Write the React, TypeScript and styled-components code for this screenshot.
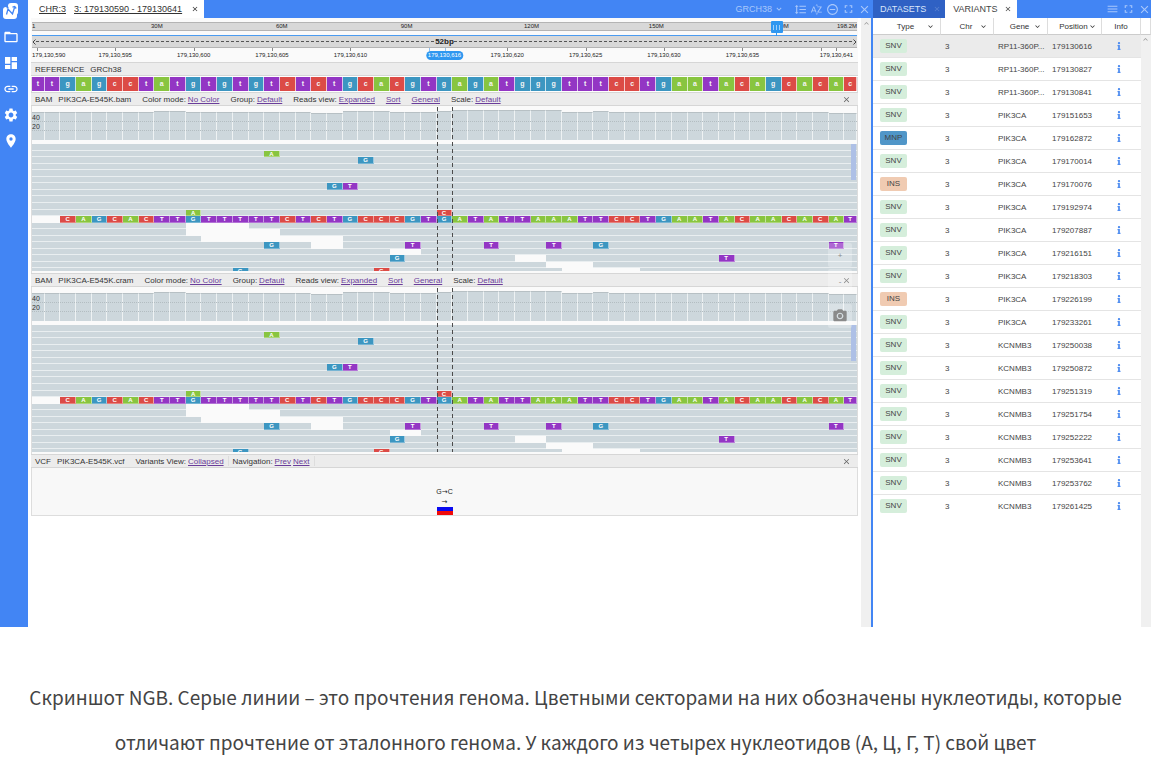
import React from "react";
import styled, { createGlobalStyle } from "styled-components";
import {
  MdCameraAlt,
  MdClose,
  MdDashboard,
  MdFolderOpen,
  MdFormatLineSpacing,
  MdFullscreen,
  MdKeyboardArrowDown,
  MdKeyboardArrowUp,
  MdLink,
  MdMenu,
  MdPlace,
  MdRemoveCircleOutline,
  MdSettings,
  MdSortByAlpha,
} from "react-icons/md";
import { FaInfo } from "react-icons/fa";

const GlobalStyle = createGlobalStyle`
  * { box-sizing: border-box; }
  body {
    margin: 0;
    background: #fff;
    color: #333;
    font-family: "Liberation Sans", Arial, sans-serif;
    font-size: 8px;
  }
  button {
    margin: 0;
    padding: 0;
    border: 0;
    background: none;
    color: inherit;
    font: inherit;
    display: flex;
    align-items: center;
    justify-content: center;
    cursor: pointer;
  }
`;

/* ---------- genome data ---------- */

const REFERENCE = "ttgagcctatgtgtgtctctgcacgtgagatgggtttcctgaatacagcacac";
const FULL_READ = "CAGCACTTGTTTTTCTCTGCCCGTGATATTAAATTCCTGAATACAACACAT";
const COLUMNS = REFERENCE.length;
const READ_ROWS = 20;
const START = 179130590;
const CURSOR = 26;

// The first and last base are cut by the viewport edges.
const EDGE = 81;
const UNITS = 2 * EDGE + 100 * (COLUMNS - 2);
const baseCenter = (k: number) => `${((EDGE - 50 + 100 * k) / UNITS) * 100}%`;
const baseLeft = (k: number) => `${((EDGE - 100 + 100 * k) / UNITS) * 100}%`;
const baseColumns = `minmax(0, ${EDGE}fr) repeat(${COLUMNS - 2}, minmax(0, 100fr)) minmax(0, ${EDGE}fr)`;

const COLORS: Record<string, string> = {
  A: "#88c540",
  C: "#dc4b46",
  G: "#3c96c1",
  T: "#9336c4",
};

type Mark = { row: number; col: number; base: string };
const MARKS: Mark[] = [
  { row: 1, col: 15, base: "A" },
  { row: 2, col: 21, base: "G" },
  { row: 6, col: 19, base: "G" },
  { row: 6, col: 20, base: "T" },
  { row: 10, col: 10, base: "A" },
  { row: 10, col: 26, base: "C" },
  ...FULL_READ.split("").map((base, i) => ({ row: 11, col: i + 2, base })),
  { row: 15, col: 15, base: "G" },
  { row: 15, col: 24, base: "T" },
  { row: 15, col: 29, base: "T" },
  { row: 15, col: 33, base: "T" },
  { row: 15, col: 36, base: "G" },
  { row: 15, col: 51, base: "T" },
  { row: 17, col: 23, base: "G" },
  { row: 17, col: 44, base: "T" },
  { row: 19, col: 13, base: "G" },
  { row: 19, col: 22, base: "C" },
];

// Stretches that no read covers: [row, first column, end column].
const GAPS = [
  [11, 0, 2],
  [12, 10, 14],
  [13, 10, 16],
  [14, 11, 20],
  [15, 18, 20],
  [16, 23, 25],
  [17, 31, 33],
  [18, 33, 36],
  [19, 34, 39],
];

const coverage = (k: number) => {
  if (k >= 27 && k <= 33) return 31;
  if (k === 26 || k === 36 || k === 8 || k === 9) return 30;
  if (k >= 20 && k <= 22) return 30;
  if (k === 18 || k === 19 || k >= 51) return 28;
  return 29;
};

const AXIS = [30, 60, 90, 120, 150, 180];
const TICKS = [0, 5, 10, 15, 20, 25, 26, 30, 35, 40, 45, 50, 51];
const LABELS = [5, 10, 15, 20, 30, 35, 40, 45, 51];
const formatPosition = (k: number) => (START + k).toLocaleString("en-US");

const VARIANTS: [string, string, string][] = [
  ["SNV", "RP11-360P...", "179130616"],
  ["SNV", "RP11-360P...", "179130827"],
  ["SNV", "RP11-360P...", "179130841"],
  ["SNV", "PIK3CA", "179151653"],
  ["MNP", "PIK3CA", "179162872"],
  ["SNV", "PIK3CA", "179170014"],
  ["INS", "PIK3CA", "179170076"],
  ["SNV", "PIK3CA", "179192974"],
  ["SNV", "PIK3CA", "179207887"],
  ["SNV", "PIK3CA", "179216151"],
  ["SNV", "PIK3CA", "179218303"],
  ["INS", "PIK3CA", "179226199"],
  ["SNV", "PIK3CA", "179233261"],
  ["SNV", "KCNMB3", "179250038"],
  ["SNV", "KCNMB3", "179250872"],
  ["SNV", "KCNMB3", "179251319"],
  ["SNV", "KCNMB3", "179251754"],
  ["SNV", "KCNMB3", "179252222"],
  ["SNV", "KCNMB3", "179253641"],
  ["SNV", "KCNMB3", "179253762"],
  ["SNV", "KCNMB3", "179261425"],
];

const BADGES: Record<string, string> = {
  SNV: "#d5eedb",
  MNP: "#5096c8",
  INS: "#f0cbb2",
};

/* ---------- frame ---------- */

const Workspace = styled.div`
  display: flex;
  min-height: 627px;
`;

const Sidebar = styled.nav`
  flex: none;
  width: 28px;
  padding: 3px 9px 0 3px;
  background: #4285f4;
  color: #fff;
  display: flex;
  flex-direction: column;
  align-items: center;
  gap: 10px;
`;

const SideButton = styled.button`
  width: 16px;
  height: 16px;
`;

const BrowserPanel = styled.main`
  flex: 1;
  min-width: 0;
  display: flex;
  flex-direction: column;
`;

const VariantsPanel = styled.section`
  flex: none;
  width: 280px;
  border-left: 2px solid #4285f4;
  display: flex;
  flex-direction: column;
`;

const TabBar = styled.header`
  height: 18px;
  background: #4285f4;
  display: flex;
  align-items: stretch;
  font-size: 9px;
`;

const Tab = styled.div<{ $active?: boolean }>`
  display: flex;
  align-items: center;
  gap: 6px;
  padding: 0 4px 0 ${(p) => (p.$active ? 8 : 7)}px;
  white-space: nowrap;
  background: ${(p) => (p.$active ? "#fff" : "#2f61c4")};
  color: ${(p) => (p.$active ? "#444" : "#dbe6fa")};
`;

const BrowserTab = styled(Tab)`
  padding: 0 5px 0 11px;
  gap: 8px;
  color: #333;
`;

const TabLink = styled.a`
  color: inherit;
  text-decoration: underline;
`;

const TabClose = styled.button<{ $dim?: boolean }>`
  width: 9px;
  height: 9px;
  opacity: ${(p) => (p.$dim ? 0.25 : 1)};
`;

const TabTools = styled.div`
  margin-left: auto;
  display: flex;
  align-items: center;
  gap: 3px;
  overflow: hidden;
  color: #a9c8fb;
`;

const ToolButton = styled.button`
  width: 13px;
  height: 14px;
`;

const GenomeButton = styled.button`
  gap: 2px;
  margin-right: 7px;
`;

/* ---------- browser body ---------- */

const BrowserBody = styled.div`
  flex: 1;
  display: flex;
  gap: 3px;
  padding-left: 3px;
`;

const Tracks = styled.div`
  position: relative;
  flex: 1;
  min-width: 0;
`;

const ScrollRail = styled.div`
  width: 10px;
  background: #f0f0f0;
  color: #999;
  display: flex;
  justify-content: center;
  padding-top: 1px;
`;

const Ruler = styled.div`
  height: 44px;
  padding: 4px 1px 0;
  background: #fafafa;
  font-size: 6px;
  color: #222;
`;

const ChromosomeBar = styled.div`
  position: relative;
  height: 9px;
  line-height: 7px;
  background: #d8d8d8;
  border: solid #b4b4b4;
  border-width: 1px 0;
  display: flex;
  justify-content: space-between;
`;

const AxisLabel = styled.span`
  position: absolute;
  top: 0;
  transform: translateX(-50%);
`;

const Brush = styled.div`
  position: absolute;
  top: -2px;
  left: 90%;
  width: 12px;
  height: 12px;
  border-radius: 1px;
  background: #2f97f0;
  display: flex;
  align-items: center;
  justify-content: center;
  gap: 2px;
  transform: translateX(-4px);

  &::after {
    content: "";
    position: absolute;
    top: 12px;
    width: 1px;
    height: 3px;
    background: #2f97f0;
  }
`;

const Grip = styled.i`
  width: 1px;
  height: 5px;
  background: #9fd0fa;
`;

const WindowBar = styled.div`
  height: 13px;
  margin-top: 4px;
  background: #d8d8d8;
  border-top: 1px solid #4a9bf0;
  border-bottom: 1px solid #b4b4b4;
  display: flex;
  align-items: center;
  font-size: 8px;
  font-weight: bold;
`;

const Dashes = styled.div`
  flex: 1;
  height: 1px;
  background: repeating-linear-gradient(90deg, #555 0 3px, transparent 3px 5px);
`;

const Arrow = styled.svg`
  width: 4px;
  height: 6px;
  fill: none;
  stroke: #444;
`;

const PositionAxis = styled.div`
  position: relative;
  height: 14px;
`;

const Tick = styled.i<{ $hot?: boolean }>`
  position: absolute;
  top: 0;
  width: 1px;
  height: 3px;
  background: ${(p) => (p.$hot ? "#8fbfee" : "#888")};
`;

const PositionLabel = styled.span<{ $hot?: boolean; $first?: boolean }>`
  position: absolute;
  top: 3px;
  height: 9px;
  line-height: 9px;
  padding: ${(p) => (p.$hot ? "0 2px" : "0")};
  border-radius: 5px;
  background: ${(p) => (p.$hot ? "#2f97f0" : "none")};
  color: ${(p) => (p.$hot ? "#fff" : "inherit")};
  transform: ${(p) => (p.$first ? "none" : "translateX(-50%)")};
`;

const TrackHeader = styled.div`
  height: 14px;
  padding: 0 7px 0 4px;
  background: #ececec;
  border: solid #d6d6d6;
  border-width: 1px 0;
  display: flex;
  align-items: center;
  white-space: nowrap;
`;

const TrackKind = styled.span`
  margin-right: 6px;
`;

const TrackFile = styled.span`
  margin-right: 11px;
`;

const TrackMenu = styled.span`
  display: flex;
  gap: 2px;
  margin-right: 11px;
`;

const MenuLink = styled.a`
  color: #6a3d9a;
  text-decoration: underline;
`;

const CloseButton = styled.button`
  width: 9px;
  height: 9px;
  margin-left: auto;
  color: #666;
`;

const Divider = styled.i`
  width: 1px;
  height: 10px;
  margin-left: -7px;
  margin-right: 4px;
  background: #ddd;
`;

const Frame = styled.div`
  border: solid #ddd;
  border-width: 0 1px;
`;

const SequenceRow = styled.div`
  height: 15px;
  margin: 1px 0 0;
  padding-bottom: 1px;
  display: grid;
  grid-template-columns: ${baseColumns};
`;

const BaseCell = styled.span<{ $base: string }>`
  background: ${(p) => COLORS[p.$base]};
  border-right: 1px solid rgba(255, 255, 255, 0.7);
  color: #f4f4f4;
  font-size: 7px;
  font-weight: bold;
  line-height: 14px;
  text-align: center;
`;

const Plot = styled.div`
  position: relative;
  padding-bottom: 2px;
  background: #fafafa;
`;

const CoverageChart = styled.div`
  position: relative;
  height: 38px;
  padding-bottom: 4px;
  display: grid;
  grid-template-columns: ${baseColumns};
  align-items: end;
`;

const CoverageBar = styled.i<{ $height: number }>`
  height: ${(p) => p.$height}px;
  background: #cdd7dc;
  border-top: 1px solid #b7c0c4;
  border-right: 1px solid #eef2f3;
`;

const GridLine = styled.i<{ $top: number }>`
  position: absolute;
  left: 0;
  right: 0;
  top: ${(p) => p.$top}px;
  border-top: 1px dotted #b3bdc1;
`;

const GridLabel = styled.span<{ $top: number }>`
  position: absolute;
  left: 0;
  top: ${(p) => p.$top}px;
  font-size: 7px;
  line-height: 8px;
`;

const ReadsViewport = styled.div`
  position: relative;
  height: 127px;
  overflow: hidden;
`;

const ReadsGrid = styled.div`
  height: 131px;
  display: grid;
  grid-template-columns: ${baseColumns};
  grid-template-rows: repeat(${READ_ROWS}, minmax(0, 1fr));
`;

const Read = styled.i<{ $row: number }>`
  grid-row: ${(p) => p.$row + 1};
  grid-column: 1 / -1;
  background: #cdd7dc;
  border-bottom: 1px solid #e9eef0;
`;

const Gap = styled.i<{ $row: number; $from: number; $to: number }>`
  grid-row: ${(p) => p.$row + 1};
  grid-column: ${(p) => p.$from + 1} / ${(p) => p.$to + 1};
  background: #fafafa;
`;

const ReadBase = styled.span<{ $row: number; $col: number; $base: string }>`
  grid-row: ${(p) => p.$row + 1};
  grid-column: ${(p) => p.$col + 1};
  background: ${(p) => COLORS[p.$base]};
  border-right: 1px solid rgba(255, 255, 255, 0.5);
  border-bottom: 1px solid rgba(255, 255, 255, 0.3);
  color: #fff;
  font-size: 6px;
  font-weight: bold;
  line-height: 6px;
  text-align: center;
`;

const ReadsScroll = styled.div`
  position: absolute;
  top: 0;
  right: 1px;
  width: 5px;
  height: 36px;
  background: #aec0e6;
`;

const Guide = styled.i`
  position: absolute;
  top: 1px;
  bottom: 2px;
  width: 1px;
  background: repeating-linear-gradient(#4c4c4c 0 4px, transparent 4px 7px);
`;

const VariantPlot = styled.div`
  position: relative;
  height: 48px;
  background: #f8f8f8;
  border-bottom: 1px solid #ddd;
`;

const VariantGlyph = styled.div`
  position: absolute;
  bottom: 0;
  transform: translateX(-50%);
  width: 16px;
  display: flex;
  flex-direction: column;
  align-items: center;
  font-size: 7px;
  line-height: 10px;
  color: #222;
`;

const ArrowSign = styled.span`
  font-family: "DejaVu Sans", sans-serif;
`;

const Flag = styled.i`
  width: 16px;
  height: 8px;
  background: linear-gradient(#0a0af0 50%, #f00a0a 50%);
`;

const FloatingTools = styled.div`
  position: absolute;
  top: 225px;
  right: 6px;
  width: 24px;
  display: flex;
  flex-direction: column;
  gap: 2px;
  color: #8a8a8a;
`;

const FloatingButton = styled.button<{ $apart?: boolean }>`
  height: 24px;
  margin-top: ${(p) => (p.$apart ? 9 : 0)}px;
  background: rgba(255, 255, 255, 0.25);
  border-radius: 2px;
`;

/* ---------- variants table ---------- */

const Table = styled.table`
  width: 100%;
  table-layout: fixed;
  border-collapse: separate;
  border-spacing: 0;
`;

const HeadCell = styled.th<{ $width: number }>`
  width: ${(p) => p.$width}px;
  height: 17px;
  padding: 0;
  border-right: 1px solid #ddd;
  border-bottom: 1px solid #ccc;
  font-weight: normal;
`;

const SortButton = styled.button`
  width: 100%;
  display: grid;
  grid-template-columns: 12px 1fr 14px;
  white-space: nowrap;
`;

const SortLabel = styled.span`
  grid-column: 2;
  justify-self: center;
`;

const Cell = styled.td`
  height: 23px;
  padding: 0 0 0 4px;
  border-bottom: 1px solid #e4e4e4;
  white-space: nowrap;
  color: #444;
`;

const Row = styled.tr<{ $selected: boolean }>`
  height: 23px;
  background: ${(p) => (p.$selected ? "#ebebeb" : "#fff")};

  &:last-child > ${Cell} {
    border-bottom-color: transparent;
  }
`;

const BadgeCell = styled(Cell)`
  padding-left: 7px;
`;

const Badge = styled.span<{ $kind: string }>`
  display: block;
  width: 27px;
  height: 14px;
  line-height: 14px;
  border-radius: 2px;
  background: ${(p) => BADGES[p.$kind]};
  text-align: center;
`;

const InfoCell = styled(Cell)`
  padding: 0;
`;

const InfoButton = styled.button`
  margin: 0 auto;
  padding-right: 5px;
  color: #4f8df0;
`;

const RailCell = styled.td`
  padding: 0;
  background: #f0f0f0;
  color: #999;
  vertical-align: top;
`;

const RailFill = styled.div`
  flex: 1;
  width: 10px;
  margin-left: auto;
  background: #f0f0f0;
`;

const Caption = styled.p`
  margin: 47px 0 0;
  padding: 0 24px;
  color: #444;
  font-family: "Noto Sans CJK SC", "Noto Sans", sans-serif;
  font-size: 19px;
  line-height: 45px;
  text-align: center;
`;

/* ---------- parts ---------- */

const Logo = () => (
  <svg width="16" height="16" viewBox="0 0 16 16" aria-hidden="true">
    <rect x="5" y="0" width="10" height="12" rx="3" fill="#fff" />
    <rect x="0" y="4" width="14" height="12" rx="3" fill="#fff" />
    <path
      d="M3.500 11.500L5 6l4.500 5L11.500 4.500M3.500 4.500h2M9.500 4.200l2.200-.7 1.500 2"
      fill="none"
      stroke="#4285f4"
      strokeWidth="1.300"
    />
  </svg>
);

const Menu = ({ label, value }: { label?: string; value: string }) => (
  <TrackMenu>
    {label && <span>{label}</span>}
    <MenuLink href="#">{value}</MenuLink>
  </TrackMenu>
);

const BamTrack = ({ file }: { file: string }) => (
  <section>
    <TrackHeader>
      <TrackKind>BAM</TrackKind>
      <TrackFile>{file}</TrackFile>
      <Menu label="Color mode:" value="No Color" />
      <Menu label="Group:" value="Default" />
      <Menu label="Reads view:" value="Expanded" />
      <Menu value="Sort" />
      <Menu value="General" />
      <Menu label="Scale:" value="Default" />
      <CloseButton aria-label="Close track">
        <MdClose size={9} />
      </CloseButton>
    </TrackHeader>
    <Frame>
      <Plot>
        <CoverageChart>
          {REFERENCE.split("").map((_, k) => (
            <CoverageBar key={k} $height={coverage(k) - 1} />
          ))}
          <GridLine $top={15} />
          <GridLine $top={24} />
          <GridLabel $top={8}>40</GridLabel>
          <GridLabel $top={17}>20</GridLabel>
        </CoverageChart>
        <ReadsViewport>
          <ReadsGrid>
            {Array.from({ length: READ_ROWS }, (_, r) => (
              <Read key={r} $row={r} />
            ))}
            {GAPS.map(([row, from, to]) => (
              <Gap key={row} $row={row} $from={from} $to={to} />
            ))}
            {MARKS.map((m) => (
              <ReadBase key={`${m.row}-${m.col}`} $row={m.row} $col={m.col} $base={m.base}>
                {m.base}
              </ReadBase>
            ))}
          </ReadsGrid>
          <ReadsScroll />
        </ReadsViewport>
        <Guide style={{ left: baseLeft(CURSOR) }} />
        <Guide style={{ left: baseLeft(CURSOR + 1) }} />
      </Plot>
    </Frame>
  </section>
);

const SortHeader = ({ label, width }: { label: string; width: number }) => (
  <HeadCell $width={width}>
    <SortButton>
      <SortLabel>{label}</SortLabel>
      <MdKeyboardArrowDown size={9} />
    </SortButton>
  </HeadCell>
);

export default function App() {
  return (
    <>
      <GlobalStyle />
      <Workspace>
        <Sidebar>
          <SideButton aria-label="Home">
            <Logo />
          </SideButton>
          <SideButton aria-label="Open">
            <MdFolderOpen size={16} />
          </SideButton>
          <SideButton aria-label="Panels">
            <MdDashboard size={16} />
          </SideButton>
          <SideButton aria-label="Share link">
            <MdLink size={16} />
          </SideButton>
          <SideButton aria-label="Settings">
            <MdSettings size={16} />
          </SideButton>
          <SideButton aria-label="Bookmarks">
            <MdPlace size={16} />
          </SideButton>
        </Sidebar>

        <BrowserPanel>
          <TabBar>
            <BrowserTab $active>
              <TabLink href="#">CHR:3</TabLink>
              <TabLink href="#">3: 179130590 - 179130641</TabLink>
              <TabClose aria-label="Close tab">
                <MdClose size={8} />
              </TabClose>
            </BrowserTab>
            <TabTools>
              <GenomeButton>
                GRCH38 <MdKeyboardArrowDown size={10} />
              </GenomeButton>
              <ToolButton aria-label="Fit tracks">
                <MdFormatLineSpacing size={13} />
              </ToolButton>
              <ToolButton aria-label="Sort tracks">
                <MdSortByAlpha size={13} />
              </ToolButton>
              <ToolButton aria-label="Collapse">
                <MdRemoveCircleOutline size={13} />
              </ToolButton>
              <ToolButton aria-label="Full screen">
                <MdFullscreen size={16} />
              </ToolButton>
              <ToolButton aria-label="Close panel">
                <MdClose size={13} />
              </ToolButton>
            </TabTools>
          </TabBar>
          <BrowserBody>
            <Tracks>
              <Ruler>
                <ChromosomeBar>
                  <span>1</span>
                  {AXIS.map((m) => (
                    <AxisLabel key={m} style={{ left: `${(m / 198.2) * 100}%` }}>
                      {m}M
                    </AxisLabel>
                  ))}
                  <span>198.2M</span>
                  <Brush>
                    <Grip />
                    <Grip />
                    <Grip />
                  </Brush>
                </ChromosomeBar>
                <WindowBar>
                  <Arrow viewBox="0 0 4 6">
                    <path d="M3.500 .5L1 3l2.500 2.500" />
                  </Arrow>
                  <Dashes />
                  52bp
                  <Dashes />
                  <Arrow viewBox="0 0 4 6">
                    <path d="M.5 .5L3 3L.5 5.500" />
                  </Arrow>
                </WindowBar>
                <PositionAxis>
                  {TICKS.map((k) => (
                    <Tick key={k} $hot={k === 25 || k === CURSOR} style={{ left: baseCenter(k) }} />
                  ))}
                  <PositionLabel $first style={{ left: 0 }}>
                    {formatPosition(0)}
                  </PositionLabel>
                  {LABELS.map((k) => (
                    <PositionLabel key={k} style={{ left: baseCenter(k) }}>
                      {formatPosition(k)}
                    </PositionLabel>
                  ))}
                  <PositionLabel $hot style={{ left: baseCenter(CURSOR) }}>
                    {formatPosition(CURSOR)}
                  </PositionLabel>
                </PositionAxis>
              </Ruler>

              <section>
                <TrackHeader>
                  <TrackKind>REFERENCE</TrackKind>
                  <TrackFile>GRCh38</TrackFile>
                </TrackHeader>
                <Frame>
                  <SequenceRow>
                    {REFERENCE.split("").map((b, k) => (
                      <BaseCell key={k} $base={b.toUpperCase()}>
                        {b}
                      </BaseCell>
                    ))}
                  </SequenceRow>
                </Frame>
              </section>

              <BamTrack file="PIK3CA-E545K.bam" />
              <BamTrack file="PIK3CA-E545K.cram" />

              <section>
                <TrackHeader>
                  <TrackKind>VCF</TrackKind>
                  <TrackFile>PIK3CA-E545K.vcf</TrackFile>
                  <Menu label="Variants View:" value="Collapsed" />
                  <Divider />
                  <TrackMenu>
                    <span>Navigation:</span>
                    <MenuLink href="#">Prev</MenuLink>
                    <MenuLink href="#">Next</MenuLink>
                  </TrackMenu>
                  <Divider />
                  <CloseButton aria-label="Close track">
                    <MdClose size={9} />
                  </CloseButton>
                </TrackHeader>
                <Frame>
                  <VariantPlot>
                    <VariantGlyph style={{ left: baseCenter(CURSOR) }}>
                      <span>
                        G<ArrowSign>→</ArrowSign>C
                      </span>
                      <ArrowSign>→</ArrowSign>
                      <Flag />
                    </VariantGlyph>
                  </VariantPlot>
                </Frame>
              </section>

              <FloatingTools>
                <FloatingButton aria-label="Zoom in">+</FloatingButton>
                <FloatingButton aria-label="Zoom out">-</FloatingButton>
                <FloatingButton $apart aria-label="Take picture">
                  <MdCameraAlt size={16} />
                </FloatingButton>
              </FloatingTools>
            </Tracks>
            <ScrollRail>
              <MdKeyboardArrowUp size={9} />
            </ScrollRail>
          </BrowserBody>
        </BrowserPanel>

        <VariantsPanel>
          <TabBar>
            <Tab>
              DATASETS
              <TabClose $dim aria-label="Close datasets">
                <MdClose size={8} />
              </TabClose>
            </Tab>
            <Tab $active>
              VARIANTS
              <TabClose aria-label="Close variants">
                <MdClose size={8} />
              </TabClose>
            </Tab>
            <TabTools>
              <ToolButton aria-label="Columns">
                <MdMenu size={16} />
              </ToolButton>
              <ToolButton aria-label="Full screen">
                <MdFullscreen size={16} />
              </ToolButton>
              <ToolButton aria-label="Close panel">
                <MdClose size={13} />
              </ToolButton>
            </TabTools>
          </TabBar>
          <Table>
            <thead>
              <tr>
                <SortHeader label="Type" width={68} />
                <SortHeader label="Chr" width={53} />
                <SortHeader label="Gene" width={54} />
                <SortHeader label="Position" width={54} />
                <HeadCell $width={39}>Info</HeadCell>
                <HeadCell $width={10} aria-label="Scroll" />
              </tr>
            </thead>
            <tbody>
              {VARIANTS.map(([kind, gene, position], i) => (
                <Row key={position} $selected={i === 0}>
                  <BadgeCell>
                    <Badge $kind={kind}>{kind}</Badge>
                  </BadgeCell>
                  <Cell>3</Cell>
                  <Cell>{gene}</Cell>
                  <Cell>{position}</Cell>
                  <InfoCell>
                    <InfoButton aria-label="Variant info">
                      <FaInfo size={8} />
                    </InfoButton>
                  </InfoCell>
                  {i === 0 && (
                    <RailCell rowSpan={VARIANTS.length}>
                      <MdKeyboardArrowUp size={9} />
                    </RailCell>
                  )}
                </Row>
              ))}
            </tbody>
          </Table>
          <RailFill />
        </VariantsPanel>
      </Workspace>
      <Caption>
        Скриншот NGB. Серые линии – это прочтения генома. Цветными секторами на них обозначены
        нуклеотиды, которые отличают прочтение от эталонного генома. У каждого из четырех
        нуклеотидов (А, Ц, Г, Т) свой цвет
      </Caption>
    </>
  );
}
